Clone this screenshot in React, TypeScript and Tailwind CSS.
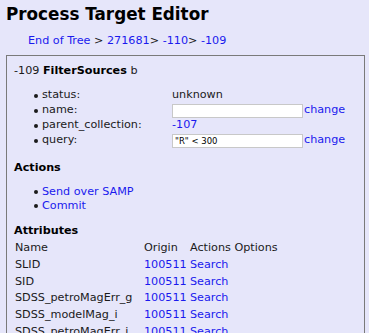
import React from "react";

const link = "text-[#1a1aee]";

function Bullet(): JSX.Element {
  return (
    <span className="w-[28px] shrink-0 flex justify-end pr-[4px] items-center">
      <span className="w-[4px] h-[4px] rounded-full bg-[#1a1a1a]" />
    </span>
  );
}

function Field({ label, children }: { label: string; children: React.ReactNode }): JSX.Element {
  return (
    <div className="flex items-center h-[15px]">
      <Bullet />
      <span className="w-[130px] shrink-0">{label}</span>
      {children}
    </div>
  );
}

function TextBox({ value }: { value: string }): JSX.Element {
  return (
    <input
      className="w-[131px] h-[14px] bg-white border border-[#c8c8c8] px-[2px] text-[8.5px] text-black outline-none"
      type="text"
      value={value}
      readOnly
    />
  );
}

const attributes = [
  "SLID",
  "SID",
  "SDSS_petroMagErr_g",
  "SDSS_modelMag_i",
  "SDSS_petroMagErr_i",
];

export default function App(): JSX.Element {
  return (
    <div
      className="w-[369px] h-[333px] overflow-hidden bg-[#e6e6fa] text-[#1a1a1a] text-[11.2px]"
      style={{ fontFamily: '"DejaVu Sans", sans-serif' }}
    >
      <h1 className="mt-[4px] pl-[6px] h-[20px] leading-[20px] text-[16.8px] font-bold text-black">
        Process Target Editor
      </h1>
      <div className="mt-[10px] pl-[28px] h-[14px] leading-[14px]">
        <a className={link}>End of Tree</a> &gt; <a className={link}>271681</a>&gt;{" "}
        <a className={link}>-110</a>&gt; <a className={link}>-109</a>
      </div>
      <div className="mt-[7px] ml-[6px] w-[359px] h-[300px] border border-[#7a7a7a] pl-[7px] pt-[8px]">
        <div className="h-[14px] leading-[14px]">
          -109 <b className="text-black">FilterSources</b> b
        </div>
        <div className="mt-[10px] flex flex-col">
          <Field label="status:">
            <span>unknown</span>
          </Field>
          <Field label="name:">
            <TextBox value="" />
            <a className={`${link} ml-[1px]`}>change</a>
          </Field>
          <Field label="parent_collection:">
            <a className={link}>-107</a>
          </Field>
          <Field label="query:">
            <TextBox value={'"R" < 300'} />
            <a className={`${link} ml-[1px]`}>change</a>
          </Field>
        </div>
        <div className="mt-[13px] h-[14px] leading-[14px] font-bold text-black">Actions</div>
        <div className="mt-[10px] flex flex-col">
          <div className="flex items-center h-[14px]">
            <Bullet />
            <a className={link}>Send over SAMP</a>
          </div>
          <div className="flex items-center h-[14px]">
            <Bullet />
            <a className={link}>Commit</a>
          </div>
        </div>
        <div className="mt-[11px] h-[14px] leading-[14px] font-bold text-black">Attributes</div>
        <table className="mt-[2px] ml-[1px] border-collapse">
          <thead>
            <tr className="h-[16px]">
              <th className="font-normal text-left p-0 w-[129px]">Name</th>
              <th className="font-normal text-left p-0 w-[46px]">Origin</th>
              <th className="font-normal text-left p-0">Actions Options</th>
            </tr>
          </thead>
          <tbody>
            {attributes.map((name) => (
              <tr key={name} className="h-[16px]">
                <td className="p-0">{name}</td>
                <td className="p-0">
                  <a className={link}>100511</a>
                </td>
                <td className="p-0">
                  <a className={link}>Search</a>
                </td>
              </tr>
            ))}
          </tbody>
        </table>
      </div>
    </div>
  );
}
